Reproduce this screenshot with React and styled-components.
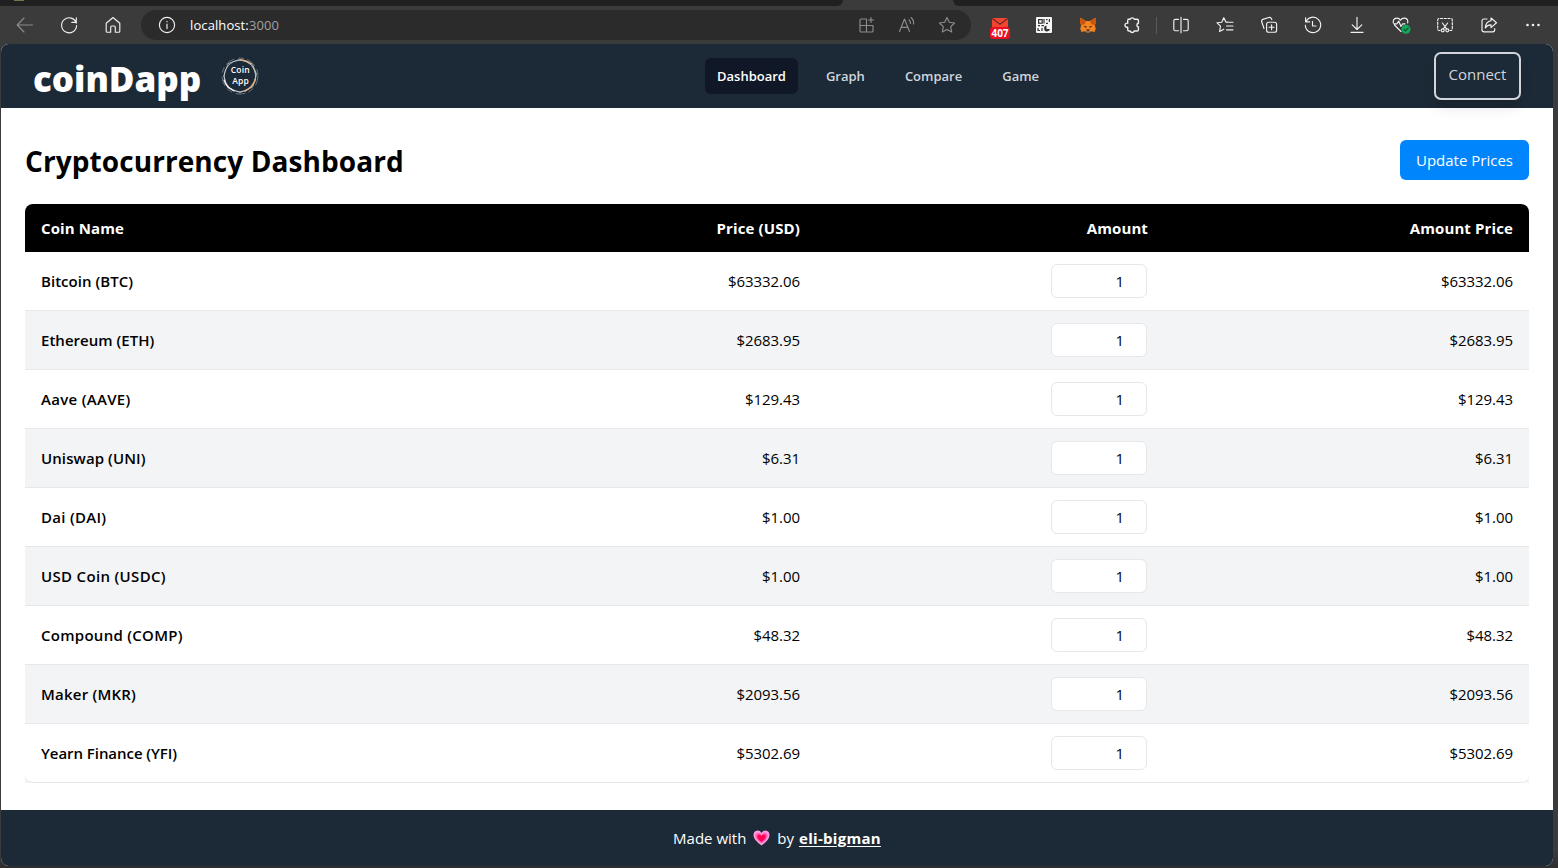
import React from "react";
import styled, { createGlobalStyle } from "styled-components";

const GlobalStyle = createGlobalStyle`
  *, *::before, *::after { box-sizing: border-box; }
  body {
    margin: 0;
    background: #3b3b3b;
    color: #000;
    font: 400 15px/24px "Open Sans", "Noto Sans", sans-serif;
  }
  h1, p { margin: 0; }
  button, input { font: inherit; }
`;

/* ---------- browser chrome ---------- */

const Window = styled.div`
  height: 868px;
  display: flex;
  flex-direction: column;
  overflow: hidden;
  background: linear-gradient(#3b3b3b 850px, #2f2f2f 867px);
`;

const TabStrip = styled.div`
  display: flex;
  flex: 0 0 6px;
  background: #3b3b3b;
`;

const InactiveTabs = styled.div`
  width: ${(p) => (p.$leading ? "843px" : "auto")};
  flex: ${(p) => (p.$leading ? "none" : "1")};
  margin-left: ${(p) => (p.$leading ? "0" : "110px")};
  background: #202020;
  border-radius: ${(p) => (p.$leading ? "0 0 6px 0" : "0 0 0 6px")};
`;

const Favicon = styled.div`
  width: 10px;
  height: 1px;
  margin-left: 14px;
  background: #77774a;
`;

const Toolbar = styled.div`
  display: flex;
  flex: 0 0 38px;
  align-items: center;
  padding-left: 3px;
  color: #f0f0f0;
`;

const ToolButton = styled.div`
  display: flex;
  flex: 0 0 ${(p) => p.$width || 44}px;
  height: 38px;
  align-items: center;
  justify-content: center;
  color: ${(p) => (p.$dim ? "#8c8c8c" : "inherit")};
`;

const AddressBar = styled.div`
  display: flex;
  align-items: center;
  width: 830px;
  height: 30px;
  margin: 0 7px 0 6px;
  padding: 0 4px 0 4px;
  border-radius: 15px;
  background: #2b2b2b;
`;

const Url = styled.div`
  flex: 1;
  padding-left: 1px;
  color: #fff;
  font-size: 13px;
  letter-spacing: 0.1px;
  line-height: 28px;
`;

const Port = styled.span`
  color: #a0a0a0;
`;

const Divider = styled.div`
  flex: 0 0 1px;
  height: 17px;
  margin: 0 2px;
  background: #5a5a5a;
`;

const Glyph = styled.svg`
  display: block;
  width: ${(p) => p.$size || 20}px;
  height: ${(p) => p.$size || 20}px;
  overflow: visible;
  fill: none;
  stroke: currentColor;
  stroke-width: 1.15;
  stroke-linecap: round;
  stroke-linejoin: round;
`;

const MailExtension = styled.div`
  display: flex;
  flex-direction: column;
  align-items: center;
  padding-top: 6px;
`;

const UnreadBadge = styled.div`
  width: 20px;
  height: 12px;
  border-radius: 3px;
  background: #e81123;
  color: #fff;
  font: 700 10px/12px "Open Sans", sans-serif;
  text-align: center;
`;

/* ---------- page ---------- */

const Page = styled.div`
  display: flex;
  flex-direction: column;
  width: 1552px;
  height: 822px;
  margin-left: 1px;
  overflow: hidden;
  border-radius: 8px;
  background: #fff;
`;

const Nav = styled.nav`
  display: grid;
  grid-template-columns: 672px 1fr auto;
  flex: 0 0 64px;
  align-items: center;
  padding: 0 32px;
  background: #1c2936;
`;

const Brand = styled.div`
  display: flex;
  align-items: center;
  gap: 19px;
`;

const BrandName = styled.div`
  padding-top: 6px;
  color: #fff;
  font-size: 35px;
  font-weight: 800;
  letter-spacing: -0.05px;
  line-height: 40px;
`;

const NavLinks = styled.div`
  display: flex;
  gap: 16px;
`;

const NavLink = styled.a`
  padding: 8px 12px;
  border-radius: 6px;
  background: ${(p) => (p.$active ? "#101827" : "transparent")};
  color: ${(p) => (p.$active ? "#fff" : "#d1d5db")};
  font-size: 13px;
  font-weight: 600;
  line-height: 20px;
`;

const ConnectButton = styled.button`
  width: 87px;
  height: 48px;
  padding: 0 0 4px;
  border: 2px solid #d1d5db;
  border-radius: 7px;
  background: transparent;
  box-shadow: 0 10px 15px -3px rgba(0, 0, 0, 0.1), 0 4px 6px -4px rgba(0, 0, 0, 0.1);
  color: #d1d5db;
`;

const NavActions = styled.div`
  position: relative;
  z-index: 1;
`;

const Main = styled.main`
  flex: 1;
  padding: 32px 24px 0;
`;

const TitleRow = styled.div`
  display: flex;
  align-items: center;
  justify-content: space-between;
  height: 40px;
  margin-bottom: 24px;
`;

const Title = styled.h1`
  padding-top: 2px;
  font-size: 28px;
  font-weight: 700;
  letter-spacing: 0.08px;
  line-height: 36px;
`;

const UpdateButton = styled.button`
  width: 129px;
  height: 40px;
  padding: 0;
  border: 0;
  border-radius: 6px;
  background: #0085fc;
  color: #fff;
`;

const TableFrame = styled.div`
  overflow: hidden;
  border-radius: 8px 8px 0 0;
  background: #f3f4f6;
`;

const Table = styled.table`
  width: 100%;
  border-collapse: separate;
  border-spacing: 0;
  table-layout: fixed;
`;

const HeadCell = styled.th`
  width: ${(p) => p.$width}px;
  height: 48px;
  padding: 0 16px 1px;
  background: #000;
  color: #fff;
  font-weight: 700;
  letter-spacing: 0.12px;
  text-align: ${(p) => (p.$left ? "left" : "right")};
`;

const Cell = styled.td`
  height: 59px;
  padding: 0 16px;
  border-bottom: 1px solid #e5e7eb;
  letter-spacing: -0.06px;
  text-align: right;
`;

const NameCell = styled(Cell)`
  font-weight: 600;
  letter-spacing: ${(p) => p.$tracking}px;
  text-align: left;
`;

const Row = styled.tr`
  background: #fff;

  &:nth-child(even) {
    background: #f3f4f6;
  }
  &:last-child {
    background: transparent;
  }
  &:last-child td {
    background: #fff;
  }
  &:last-child td:first-child {
    border-bottom-left-radius: 8px;
  }
  &:last-child td:last-child {
    border-bottom-right-radius: 8px;
  }
`;

const AmountInput = styled.input`
  display: block;
  width: 96px;
  height: 34px;
  margin-left: auto;
  margin-right: 1px;
  padding: 0 22px 0 8px;
  border: 1px solid #e5e7eb;
  border-radius: 6px;
  background: #fff;
  color: #000;
  text-align: right;
`;

const Footer = styled.footer`
  display: flex;
  flex: 0 0 56px;
  align-items: center;
  justify-content: center;
  background: #1c2936;
  color: #fff;
`;

const Author = styled.a`
  margin-left: 5px;
  font-weight: 700;
  letter-spacing: 0.28px;
  text-decoration: underline;
  text-underline-offset: 2px;
`;

const HeartSlot = styled.span`
  display: flex;
  margin: 0 7px 0 7px;
`;

/* ---------- drawings ---------- */

const BackIcon = () => (
  <Glyph viewBox="0 0 20 20"><path d="M17.5 10H2.5M9 3L2.2 10L9 17" /></Glyph>
);
const RefreshIcon = () => (
  <Glyph viewBox="0 0 20 20">
    <path d="M17.3 8.2A7.5 7.5 0 1 0 17.6 10.5M17.3 2.8V7.4H12.8" />
  </Glyph>
);
const HomeIcon = () => (
  <Glyph viewBox="0 0 20 20">
    <path d="M3.2 8.3L10 2.5L16.8 8.3V16.2Q16.8 17.2 15.8 17.2H12.3V12.2Q12.3 11 11.2 11H8.8Q7.7 11 7.7 12.2V17.2H4.2Q3.2 17.2 3.2 16.2Z" />
  </Glyph>
);
const InfoIcon = () => (
  <Glyph viewBox="0 0 20 20">
    <circle cx="10" cy="10" r="7.6" />
    <path d="M10 9V13.6M10 6.4V6.7" />
  </Glyph>
);
const AppsIcon = () => (
  <Glyph viewBox="0 0 20 20">
    <path d="M9.5 4H4Q3 4 3 5V16Q3 17 4 17H15Q16 17 16 16V10.5H3M9.5 4V17M14 2.5V7.5M11.5 5H16.5" />
  </Glyph>
);
const ReadAloudIcon = () => (
  <Glyph viewBox="0 0 20 20">
    <path d="M2.5 16.5L7.5 4L12.5 16.5M4.2 12.3H10.8M12 4.8Q13.5 6.3 13.5 8.5M14 2.5Q17 5 16.6 9" />
  </Glyph>
);
const StarIcon = () => (
  <Glyph viewBox="0 0 20 20">
    <path d="M10 2.4L12.3 7.3L17.6 8L13.7 11.7L14.7 17L10 14.4L5.3 17L6.3 11.7L2.4 8L7.7 7.3Z" />
  </Glyph>
);
const EnvelopeIcon = () => (
  <svg width="16" height="9" viewBox="0 0 16 9">
    <path d="M0 0H16V9H0Z" fill="#f4432f" />
    <path d="M0 .3L8 6.2L16 .3" fill="none" stroke="#5d2b28" strokeWidth="1.1" />
  </svg>
);
const QrIcon = () => (
  <svg width="16" height="16" viewBox="0 0 16 16">
    <rect width="16" height="16" rx="1" fill="#f6f6f6" />
    <g fill="none" stroke="#333" strokeWidth="1.2">
      <rect x="2.6" y="2.6" width="3.6" height="3.6" />
      <path d="M8 2V6.5M10 2.6H11.5M13.4 2V5M10 6.4H12M2 8.6H4M5.5 8.6H8M2 11V13.5H4M6 11V14" />
    </g>
    <path d="M10.5 8.5A3 3 0 1 0 14 12H10.5Z" fill="#333" />
  </svg>
);
const FoxIcon = () => (
  <svg width="16" height="16" viewBox="0 0 16 16">
    <path d="M.6 .8L6 4H10L15.4 .8L16 5.5L14.8 8.5L15.8 11.5L14.5 15L11 14.2L9.6 15.5H6.4L5 14.2L1.5 15L.2 11.5L1.2 8.5L0 5.5Z" fill="#f5841f" />
    <path d="M.6 .8L6 4L4.8 7.2L1.2 8L0 5.5ZM15.4 .8L10 4L11.2 7.2L14.8 8L16 5.5Z" fill="#c9560f" />
    <path d="M3.5 9.3L6.4 9L6.2 11ZM12.5 9.3L9.6 9L9.8 11Z" fill="#41291a" />
    <path d="M6.2 12.6H9.8L9.6 15.2H6.4Z" fill="#8b6a55" />
    <path d="M6.7 12.4H9.3L9 13.5H7Z" fill="#251c17" />
  </svg>
);
const PuzzleIcon = () => (
  <Glyph viewBox="0 0 20 20">
    <path strokeWidth="1.4" d="M6 4.3H8.2A2.1 2.1 0 0 1 12.2 4.3H15.1Q16.4 4.3 16.4 5.6V8.3A1.9 1.9 0 0 0 16.4 12V14.8Q16.4 16 15.1 16H12.2A2.1 2.1 0 0 1 8.2 16H6.9Q5.7 16 5.7 14.8V12.2A2.1 2.1 0 1 1 5.7 8.2V5.5" />
  </Glyph>
);
const SplitIcon = () => (
  <Glyph viewBox="0 0 20 20">
    <path d="M7.5 4.3H4.3Q2.8 4.3 2.8 5.8V14.2Q2.8 15.7 4.3 15.7H7.5M12.5 4.3H15.7Q17.2 4.3 17.2 5.8V14.2Q17.2 15.7 15.7 15.7H12.5M10 2.3V17.7" />
  </Glyph>
);
const FavoritesIcon = () => (
  <Glyph viewBox="0 0 20 20">
    <path d="M12.4 7.1H10.9L8.8 2.7L6.7 7.2L2 7.8L5.5 11.2L4.6 16.5L8.8 14.2M13 7.2H18M11.5 11H18M11.5 14.8H18" />
  </Glyph>
);
const CollectionsIcon = () => (
  <Glyph viewBox="0 0 20 20">
    <rect x="7.6" y="7.2" width="10" height="10" rx="2" />
    <path d="M12.6 9.7V14.7M10.1 12.2H15.1M5 13.5L2.7 6.8Q2.2 5.1 3.8 4.4L9.8 2.5Q11.5 2.1 12.3 3.5L12.8 4.6" />
  </Glyph>
);
const HistoryIcon = () => (
  <Glyph viewBox="0 0 20 20">
    <path d="M3 6.7A7.7 7.7 0 1 1 2.3 10.2M2.6 2.8V6.8H6.7M9.5 6.4V11H13" />
  </Glyph>
);
const DownloadIcon = () => (
  <Glyph viewBox="0 0 20 20">
    <path d="M10 2.3V14M5.2 9.8L10 14.5L14.8 9.8M4 17.4H16" />
  </Glyph>
);
const EssentialsIcon = () => (
  <Glyph viewBox="0 0 20 20">
    <path d="M10 16.5L3.5 10M2.3 8Q1.6 3.6 5.7 3.1Q8.3 3 9.5 5.2Q11 2.8 13.7 3.1Q17.5 3.7 16.7 8M3 8.8H6L7.7 6L10 11.5L11.7 8.8H14" />
    <circle cx="15" cy="14.3" r="4.5" fill="#12a85a" stroke="none" />
    <path d="M13 14.4L14.5 15.9L17.2 12.9" stroke="#164b30" />
  </Glyph>
);
const SnipIcon = () => (
  <Glyph viewBox="0 0 20 20">
    <path d="M5 15.5H4.2Q2.7 15.5 2.7 14V5Q2.7 3.5 4.2 3.5H15.8Q17.3 3.5 17.3 5V14Q17.3 15.5 15.8 15.5H15" strokeDasharray="2.2 1.6" />
    <path d="M7.4 8L11.6 13.8M12.6 8L8.4 13.8" />
    <circle cx="7.7" cy="15.3" r="1.5" />
    <circle cx="12.3" cy="15.3" r="1.5" />
  </Glyph>
);
const ShareIcon = () => (
  <Glyph viewBox="0 0 20 20">
    <path d="M8 4H5Q3 4 3 6V14.8Q3 16.8 5 16.8H13.7Q15.7 16.8 15.7 14.8V13.5" />
    <path d="M12 3L17.5 7.8L12 12.6V9.9Q8.5 9.7 6.3 12.8Q6.8 6.5 12 5.8Z" />
  </Glyph>
);
const MoreIcon = () => (
  <Glyph viewBox="0 0 20 20">
    <g fill="currentColor" stroke="none">
      <circle cx="4.5" cy="10" r="1.3" /><circle cx="10" cy="10" r="1.3" /><circle cx="15.5" cy="10" r="1.3" />
    </g>
  </Glyph>
);

const LogoText = styled.text`
  fill: #fff;
  stroke: none;
  font: 600 8.5px "Open Sans", sans-serif;
  letter-spacing: 0.2px;
  text-anchor: middle;
`;

const LogoMark = () => (
  <Glyph viewBox="0 0 40 40" $size={40}>
    <path d="M20 3.4L32 7.8L36.3 19L32.8 31L20 36.6L7.5 31.4L3.6 20L8 8Z" stroke="#a3adb6" strokeWidth=".9" />
    <circle cx="20" cy="20" r="15.8" stroke="#d3d6d8" strokeWidth=".8" />
    <circle cx="20" cy="20" r="18" stroke="#89949e" strokeWidth=".7" strokeDasharray="9 5 5 4" />
    <path d="M20 3.7Q26 4 31 8" stroke="#e8b287" strokeWidth="1.3" />
    <path d="M33 10L36.3 18" stroke="#b6c9a7" strokeWidth="1.1" />
    <path d="M35.5 23Q33 31 25 35" stroke="#e4ae7e" strokeWidth="1.4" />
    <path d="M4 24Q6 31 14 35" stroke="#f5f5f5" strokeWidth="1.1" />
    <LogoText x="20.3" y="16.8">Coin</LogoText>
    <LogoText x="20.6" y="28.2">App</LogoText>
  </Glyph>
);

const GrowingHeart = () => (
  <svg width="17" height="16" viewBox="0 0 17 16">
    <path d="M8.5 15.4Q1 10.5 .5 5.5Q.5 .8 4.6 .6Q7.2 .6 8.5 3Q9.8 .6 12.4 .6Q16.5 .8 16.5 5.5Q16 10.5 8.5 15.4Z" fill="#ff9be0" />
    <path d="M8.5 13.3Q2.8 9.5 2.4 5.9Q2.4 2.9 5 2.8Q7.3 2.8 8.5 5Q9.7 2.8 12 2.8Q14.6 2.9 14.6 5.9Q14.2 9.5 8.5 13.3Z" fill="#ff5fb0" />
    <path d="M8.5 11.9Q4.4 9 4.2 6.4Q4.3 4.5 6 4.5Q7.7 4.6 8.5 6.3Q9.3 4.6 11 4.5Q12.7 4.5 12.8 6.4Q12.6 9 8.5 11.9Z" fill="#ff0050" />
  </svg>
);

/* ---------- data ---------- */

const coins = [
  { name: "Bitcoin (BTC)", price: "63332.06", tracking: 0.03 },
  { name: "Ethereum (ETH)", price: "2683.95", tracking: 0.02 },
  { name: "Aave (AAVE)", price: "129.43", tracking: 0.3 },
  { name: "Uniswap (UNI)", price: "6.31", tracking: 0.1 },
  { name: "Dai (DAI)", price: "1.00", tracking: 0.28 },
  { name: "USD Coin (USDC)", price: "1.00", tracking: 0.33 },
  { name: "Compound (COMP)", price: "48.32", tracking: 0.28 },
  { name: "Maker (MKR)", price: "2093.56", tracking: 0.22 },
  { name: "Yearn Finance (YFI)", price: "5302.69", tracking: -0.05 },
];

const sidebarTools = [
  SplitIcon, FavoritesIcon, CollectionsIcon, HistoryIcon, DownloadIcon,
  EssentialsIcon, SnipIcon, ShareIcon, MoreIcon,
];

export default function App() {
  return (
    <Window>
      <GlobalStyle />
      <TabStrip>
        <InactiveTabs $leading><Favicon /></InactiveTabs>
        <InactiveTabs />
      </TabStrip>
      <Toolbar>
        <ToolButton $dim><BackIcon /></ToolButton>
        <ToolButton><RefreshIcon /></ToolButton>
        <ToolButton><HomeIcon /></ToolButton>
        <AddressBar>
          <ToolButton><InfoIcon /></ToolButton>
          <Url>localhost:<Port>3000</Port></Url>
          <ToolButton $dim $width={40}><AppsIcon /></ToolButton>
          <ToolButton $dim $width={40}><ReadAloudIcon /></ToolButton>
          <ToolButton $dim $width={40}><StarIcon /></ToolButton>
        </AddressBar>
        <ToolButton>
          <MailExtension>
            <EnvelopeIcon />
            <UnreadBadge>407</UnreadBadge>
          </MailExtension>
        </ToolButton>
        <ToolButton><QrIcon /></ToolButton>
        <ToolButton><FoxIcon /></ToolButton>
        <ToolButton><PuzzleIcon /></ToolButton>
        <Divider />
        {sidebarTools.map((Icon, i) => (
          <ToolButton key={i}><Icon /></ToolButton>
        ))}
      </Toolbar>
      <Page>
        <Nav>
          <Brand>
            <BrandName>coinDapp</BrandName>
            <LogoMark />
          </Brand>
          <NavLinks>
            <NavLink $active>Dashboard</NavLink>
            <NavLink>Graph</NavLink>
            <NavLink>Compare</NavLink>
            <NavLink>Game</NavLink>
          </NavLinks>
          <NavActions>
            <ConnectButton>Connect</ConnectButton>
          </NavActions>
        </Nav>
        <Main>
          <TitleRow>
            <Title>Cryptocurrency Dashboard</Title>
            <UpdateButton>Update Prices</UpdateButton>
          </TitleRow>
          <TableFrame>
            <Table>
              <thead>
                <tr>
                  <HeadCell $left $width={430}>Coin Name</HeadCell>
                  <HeadCell $width={361}>Price (USD)</HeadCell>
                  <HeadCell $width={348}>Amount</HeadCell>
                  <HeadCell $width={365}>Amount Price</HeadCell>
                </tr>
              </thead>
              <tbody>
                {coins.map(({ name, price, tracking }) => (
                  <Row key={name}>
                    <NameCell $tracking={tracking}>{name}</NameCell>
                    <Cell>${price}</Cell>
                    <Cell><AmountInput defaultValue="1" /></Cell>
                    <Cell>${price}</Cell>
                  </Row>
                ))}
              </tbody>
            </Table>
          </TableFrame>
        </Main>
        <Footer>
          Made with
          <HeartSlot><GrowingHeart /></HeartSlot>
          by
          <Author>eli-bigman</Author>
        </Footer>
      </Page>
    </Window>
  );
}
